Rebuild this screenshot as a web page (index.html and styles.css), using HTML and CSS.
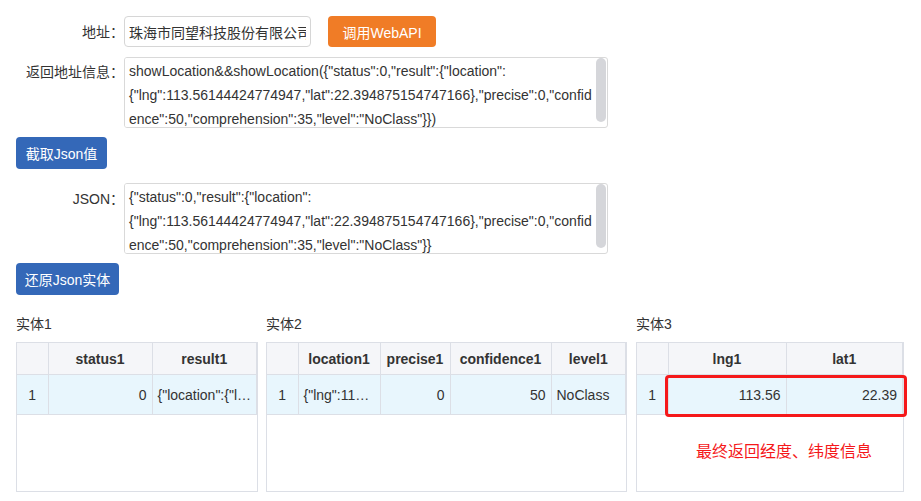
FILE: index.html
```html
<!DOCTYPE html>
<html lang="zh-CN">
<head>
    <meta charset="UTF-8">
    <title>调用WebAPI</title>
    <link rel="stylesheet" href="styles.css">
</head>
<body>
    <div class="page">
        <div class="form-row row-addr">
            <label class="form-label" for="address">地址：</label>
            <input type="text" id="address" class="addr-input" value="珠海市同望科技股份有限公司">
            <button type="button" class="btn btn-orange">调用WebAPI</button>
        </div>

        <div class="form-row row-area">
            <label class="form-label label-area" for="retInfo">返回地址信息：</label>
            <div class="area-wrap">
                <textarea id="retInfo" class="json-area">showLocation&&showLocation({"status":0,"result":{"location":{"lng":113.56144424774947,"lat":22.394875154747166},"precise":0,"confidence":50,"comprehension":35,"level":"NoClass"}})</textarea>
                <div class="area-scroll"><div class="area-thumb"></div></div>
            </div>
        </div>

        <button type="button" class="btn btn-blue btn-get">截取Json值</button>

        <div class="form-row row-json">
            <label class="form-label label-json" for="jsonText">JSON：</label>
            <div class="area-wrap">
                <textarea id="jsonText" class="json-area">{"status":0,"result":{"location":{"lng":113.56144424774947,"lat":22.394875154747166},"precise":0,"confidence":50,"comprehension":35,"level":"NoClass"}}</textarea>
                <div class="area-scroll"><div class="area-thumb"></div></div>
            </div>
        </div>

        <button type="button" class="btn btn-blue btn-restore">还原Json实体</button>

        <div class="grids">
            <div class="grid-panel panel1">
                <div class="grid-title">实体1</div>
                <div class="grid-box">
                    <table class="grid">
                        <colgroup><col class="c-num"><col style="width:104px"><col></colgroup>
                        <thead>
                            <tr><th></th><th>status1</th><th>result1</th></tr>
                        </thead>
                        <tbody>
                            <tr><td class="num">1</td><td class="right">0</td><td>{"location":{"l…</td></tr>
                        </tbody>
                    </table>
                </div>
            </div>

            <div class="grid-panel panel2">
                <div class="grid-title">实体2</div>
                <div class="grid-box">
                    <table class="grid">
                        <colgroup><col class="c-num"><col style="width:82px"><col style="width:70px"><col style="width:101px"><col></colgroup>
                        <thead>
                            <tr><th></th><th>location1</th><th>precise1</th><th>confidence1</th><th>level1</th></tr>
                        </thead>
                        <tbody>
                            <tr><td class="num">1</td><td>{"lng":11…</td><td class="right">0</td><td class="right">50</td><td>NoClass</td></tr>
                        </tbody>
                    </table>
                </div>
            </div>

            <div class="grid-panel panel3">
                <div class="grid-title">实体3</div>
                <div class="grid-box">
                    <table class="grid">
                        <colgroup><col class="c-num"><col style="width:118px"><col></colgroup>
                        <thead>
                            <tr><th></th><th>lng1</th><th>lat1</th></tr>
                        </thead>
                        <tbody>
                            <tr><td class="num">1</td><td class="right">113.56</td><td class="right">22.39</td></tr>
                        </tbody>
                    </table>
                    <!-- 标注 -->
                    <div class="mark-box"></div>
                    <div class="mark-text">最终返回经度、纬度信息</div>
                </div>
            </div>
        </div>
    </div>
</body>
</html>
```

FILE: styles.css
```css
body {
    margin: 0;
    font-family: "Liberation Sans", "Noto Sans CJK SC", sans-serif;
    font-size: 14px;
    color: #333;
    background-color: #fff;
}
.page {
    padding: 16px 0 0 16px;
}
.form-row {
    display: flex;
    align-items: flex-start;
}
.row-addr {
    align-items: center;
    height: 31px;
}
.row-area {
    margin-top: 10px;
}
.row-json {
    margin-top: 14px;
}
.form-label {
    width: 108px;
    flex-shrink: 0;
    text-align: right;
    line-height: 20px;
}
.label-area {
    padding-top: 5px;
}
.label-json {
    padding-top: 6px;
}
.addr-input {
    box-sizing: border-box;
    width: 187px;
    height: 31px;
    padding: 0 4px;
    border: 1px solid #d6d6d6;
    border-radius: 4px;
    font-family: inherit;
    font-size: 14px;
    color: #333;
    outline: none;
}
.btn {
    display: block;
    border: none;
    border-radius: 4px;
    color: #fff;
    font-family: inherit;
    font-size: 14px;
    padding: 0;
    cursor: pointer;
}
.btn-orange {
    background-color: #f07c26;
    width: 108px;
    height: 31px;
    margin-left: 17px;
}
.btn-blue {
    background-color: #3468b8;
    height: 32px;
}
.btn-get {
    width: 91px;
    margin-top: 9px;
}
.btn-restore {
    width: 103px;
    margin-top: 9px;
}
.area-wrap {
    display: flex;
    box-sizing: border-box;
    width: 484px;
    height: 71px;
    border: 1px solid #d9d9d9;
    border-radius: 3px;
    overflow: hidden;
}
.json-area {
    flex: 1;
    box-sizing: border-box;
    height: 100%;
    margin: 0;
    padding: 1px 2px 0 4px;
    border: none;
    font-family: inherit;
    font-size: 14px;
    line-height: 24px;
    color: #333;
    resize: none;
    overflow: hidden;
    overflow-wrap: break-word;
    outline: none;
}
.area-scroll {
    width: 11px;
    flex-shrink: 0;
}
.area-thumb {
    width: 10px;
    height: 64px;
    background-color: #d5d6da;
    border-radius: 5px;
}
.grids {
    display: flex;
    margin-top: 19px;
}
.panel1 {
    width: 242px;
}
.panel2 {
    width: 361px;
    margin-left: 8px;
}
.panel3 {
    width: 268px;
    margin-left: 9px;
}
.grid-title {
    line-height: 20px;
    margin-bottom: 8px;
}
.grid-box {
    position: relative;
    box-sizing: border-box;
    height: 150px;
    border: 1px solid #dcdfe6;
}
.grid {
    width: 100%;
    table-layout: fixed;
    border-collapse: collapse;
}
.c-num {
    width: 31px;
}
.grid th {
    height: 31px;
    background-color: #f5f6f9;
    border-right: 1px solid #dcdfe6;
    border-bottom: 1px solid #dcdfe6;
    font-weight: bold;
    text-align: center;
    padding: 0 5px;
    white-space: nowrap;
}
.grid td {
    height: 39px;
    background-color: #e8f6fd;
    border-right: 1px solid #dcdfe6;
    border-bottom: 1px solid #dcdfe6;
    padding: 0 5px;
    white-space: nowrap;
    overflow: hidden;
}
.grid td.num {
    text-align: center;
    padding: 0;
}
.grid td.right {
    text-align: right;
}
.mark-box {
    position: absolute;
    left: 28px;
    top: 32px;
    width: 242px;
    height: 42px;
    box-sizing: border-box;
    border: 3px solid #f5181a;
    border-radius: 4px;
}
.mark-text {
    position: absolute;
    left: 59px;
    top: 95px;
    font-size: 16px;
    color: #f5181a;
}
```
